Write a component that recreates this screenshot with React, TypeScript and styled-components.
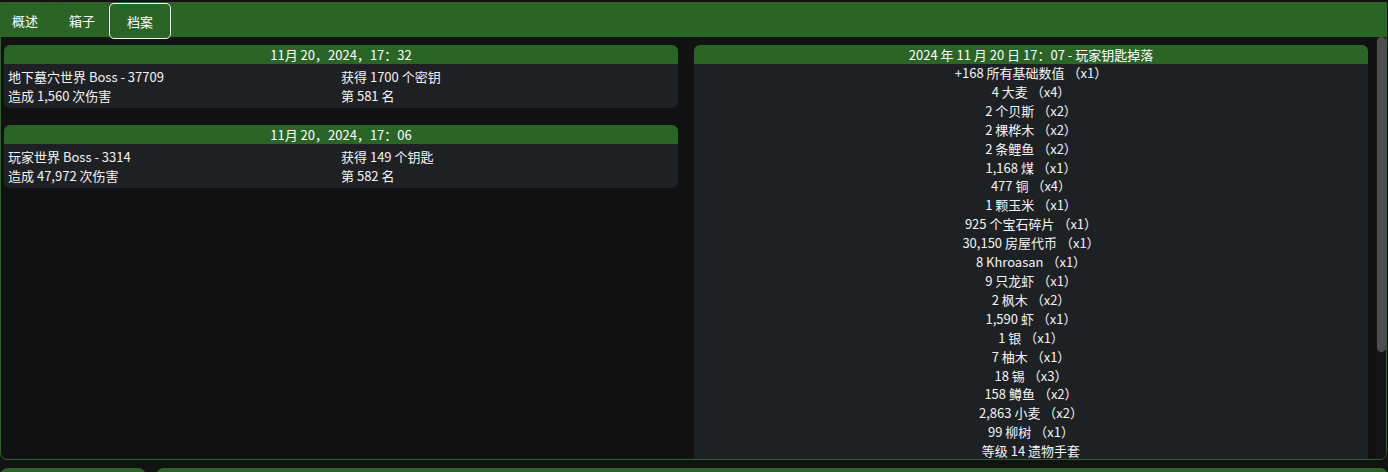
import * as React from "react";
import styled, { createGlobalStyle } from "styled-components";

const green = "#2b6427";
const panel = "#1e2124";
const page = "#121212";

const GlobalStyle = createGlobalStyle`
  html, body {
    margin: 0;
    height: 100%;
    overflow: hidden;
    background: ${page};
    color: #f4f4f4;
    font-family: "Noto Sans CJK SC", "Noto Sans", sans-serif;
    font-size: 13px;
  }
  * {
    box-sizing: border-box;
  }
`;

const Frame = styled.div`
  margin-top: 2px;
  width: 1387px;
  height: 458px;
  border: 1px solid ${green};
  border-radius: 0 0 7px 7px;
  display: flex;
  flex-direction: column;
  overflow: hidden;
`;

const TabBar = styled.div`
  position: relative;
  z-index: 1;
  height: 34px;
  min-height: 0;
  flex-shrink: 0;
  display: flex;
  align-items: flex-start;
  gap: 9px;
  background: ${green};
  overflow: visible;
`;

const Tab = styled.div<{ $active?: boolean }>`
  height: ${(p) => (p.$active ? "36px" : "34px")};
  display: flex;
  align-items: center;
  padding: 0 ${(p) => (p.$active ? "17px" : "10px")};
  margin-left: ${(p) => (p.$active ? "-6px" : "0")};
  border: 1px solid ${(p) => (p.$active ? "#f4f4f4" : "transparent")};
  border-radius: 5px;
  background: ${green};
  color: #ffffff;
  cursor: pointer;
`;

const Body = styled.div`
  flex: 1;
  min-height: 0;
  display: flex;
`;

const Scroller = styled.div`
  flex: 1;
  overflow: hidden;
  padding: 8px 8px 0 3px;
`;

const ScrollTrack = styled.div`
  flex: 0 0 10px;
  background: #151515;
  padding-left: 1px;
`;

const ScrollThumb = styled.div`
  height: 315px;
  border-radius: 5px;
  background: #4e4e4e;
`;

const Columns = styled.div`
  display: grid;
  grid-template-columns: 1fr 1fr;
  column-gap: 16px;
  align-items: start;
`;

const Stack = styled.div`
  display: flex;
  flex-direction: column;
  gap: 17px;
`;

const Card = styled.div`
  background: ${panel};
  border-radius: 6px;
  overflow: hidden;
`;

const CardHeader = styled.div`
  height: 19px;
  line-height: 19px;
  text-align: center;
  background: ${green};
  color: #ffffff;
`;

const FightBody = styled.div`
  display: grid;
  grid-template-columns: 1fr 1fr;
  padding: 3px 4px;
  line-height: 19px;
`;

const DropBody = styled.div`
  display: flex;
  flex-direction: column;
  align-items: center;
  line-height: 18.9px;
  padding-bottom: 141px;
`;

const Footer = styled.div`
  display: flex;
  gap: 10px;
  margin-top: 8px;
`;

const FooterTab = styled.div<{ $grow?: boolean }>`
  height: 12px;
  flex: ${(p) => (p.$grow ? "1" : "0 0 146px")};
  background: ${green};
  border-radius: 8px 8px 0 0;
`;

type Fight = {
  time: string;
  boss: string;
  damage: string;
  reward: string;
  rank: string;
};

const fights: Fight[] = [
  {
    time: "11月 20，2024，17：32",
    boss: "地下墓穴世界 Boss - 37709",
    damage: "造成 1,560 次伤害",
    reward: "获得 1700 个密钥",
    rank: "第 581 名",
  },
  {
    time: "11月 20，2024，17：06",
    boss: "玩家世界 Boss - 3314",
    damage: "造成 47,972 次伤害",
    reward: "获得 149 个钥匙",
    rank: "第 582 名",
  },
];

const drops = [
  "+168 所有基础数值 （x1）",
  "4 大麦 （x4）",
  "2 个贝斯 （x2）",
  "2 棵桦木 （x2）",
  "2 条鲤鱼 （x2）",
  "1,168 煤 （x1）",
  "477 铜 （x4）",
  "1 颗玉米 （x1）",
  "925 个宝石碎片 （x1）",
  "30,150 房屋代币 （x1）",
  "8 Khroasan （x1）",
  "9 只龙虾 （x1）",
  "2 枫木 （x2）",
  "1,590 虾 （x1）",
  "1 银 （x1）",
  "7 柚木 （x1）",
  "18 锡 （x3）",
  "158 鳟鱼 （x2）",
  "2,863 小麦 （x2）",
  "99 柳树 （x1）",
  "等级 14 遗物手套",
];

export default function App() {
  const [tab, setTab] = React.useState(2);
  const tabs = ["概述", "箱子", "档案"];

  return (
    <>
      <GlobalStyle />
      <Frame>
        <TabBar>
          {tabs.map((label, i) => (
            <Tab key={label} $active={tab === i} onClick={() => setTab(i)}>
              {label}
            </Tab>
          ))}
        </TabBar>
        <Body>
          <Scroller>
            <Columns>
              <Stack>
                {fights.map((f) => (
                  <Card key={f.time}>
                    <CardHeader>{f.time}</CardHeader>
                    <FightBody>
                      <span>{f.boss}</span>
                      <span>{f.reward}</span>
                      <span>{f.damage}</span>
                      <span>{f.rank}</span>
                    </FightBody>
                  </Card>
                ))}
              </Stack>
              <Card>
                <CardHeader>2024 年 11 月 20 日 17：07 - 玩家钥匙掉落</CardHeader>
                <DropBody>
                  {drops.map((d) => (
                    <span key={d}>{d}</span>
                  ))}
                </DropBody>
              </Card>
            </Columns>
          </Scroller>
          <ScrollTrack>
            <ScrollThumb />
          </ScrollTrack>
        </Body>
      </Frame>
      <Footer>
        <FooterTab />
        <FooterTab $grow />
      </Footer>
    </>
  );
}
